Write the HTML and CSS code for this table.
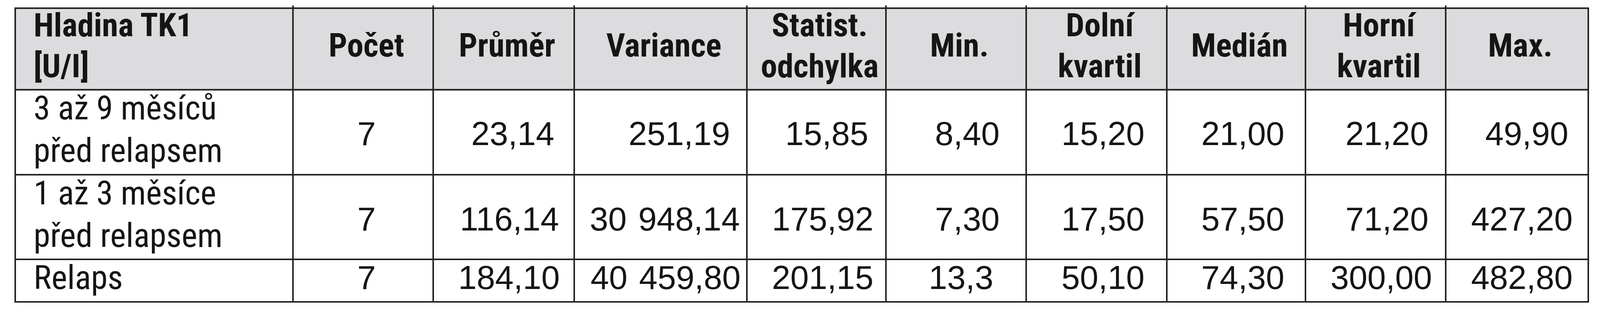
FILE: index.html
```html
<!DOCTYPE html>
<html lang="cs">
<head>
<meta charset="utf-8">
<title>Hladina TK1</title>
<link rel="stylesheet" href="styles.css">
</head>
<body>
<div class="tbl">
  <div class="row hd">
    <div class="c h first">Hladina TK1<br>[U/I]</div>
    <div class="c h">Počet</div>
    <div class="c h">Průměr</div>
    <div class="c h">Variance</div>
    <div class="c h">Statist.<br>odchylka</div>
    <div class="c h">Min.</div>
    <div class="c h">Dolní<br>kvartil</div>
    <div class="c h">Medián</div>
    <div class="c h">Horní<br>kvartil</div>
    <div class="c h">Max.</div>
  </div>
  <div class="row r1">
    <div class="c t">3 až 9 měsíců<br>před relapsem</div>
    <div class="c n cnt">7</div>
    <div class="c n p49">23,14</div>
    <div class="c n p41">251,19</div>
    <div class="c n p43">15,85</div>
    <div class="c n p66">8,40</div>
    <div class="c n p55">15,20</div>
    <div class="c n p52">21,00</div>
    <div class="c n p42">21,20</div>
    <div class="c n p49">49,90</div>
  </div>
  <div class="row r2">
    <div class="c t">1 až 3 měsíce<br>před relapsem</div>
    <div class="c n cnt">7</div>
    <div class="c n p37">116,14</div>
    <div class="c n p16">30 948,14</div>
    <div class="c n p30">175,92</div>
    <div class="c n p66">7,30</div>
    <div class="c n p55">17,50</div>
    <div class="c n p52">57,50</div>
    <div class="c n p42">71,20</div>
    <div class="c n p38">427,20</div>
  </div>
  <div class="row r3">
    <div class="c t">Relaps</div>
    <div class="c n cnt">7</div>
    <div class="c n p35">184,10</div>
    <div class="c n p14">40 459,80</div>
    <div class="c n p30">201,15</div>
    <div class="c n p82">13,3</div>
    <div class="c n p55">50,10</div>
    <div class="c n p52">74,30</div>
    <div class="c n p33">300,00</div>
    <div class="c n p38">482,80</div>
  </div>
</div>
</body>
</html>
```
FILE: styles.css
```css
html, body {
  margin: 0;
  padding: 0;
  background: #ffffff;
}

body {
  color: #151515;
  font-family: "Liberation Sans", Arial, sans-serif;
}

.tbl {
  display: grid;
  grid-template-columns: 707px 355px 357px 438px 352px 355px 356px 351px 355px 361px;
  grid-template-rows: 205px 214px 213px 105px;
  gap: 4px;
  padding: 4px;
  background: #242424;
  width: max-content;
  margin: 19px 0 0 37px;
}

.row {
  display: contents;
}

.c {
  position: relative;
  box-sizing: border-box;
  display: flex;
  align-items: center;
  background: #ffffff;
  white-space: nowrap;
}

/* header */
.h {
  background: #dcdcde;
  font-family: "Roboto Condensed", "Liberation Sans", sans-serif;
  font-weight: 700;
  font-size: 84px;
  line-height: 105px;
  justify-content: center;
  text-align: center;
  padding: 0 0 18px 17px;
}

.h.first {
  justify-content: flex-start;
  text-align: left;
  padding: 0 0 18px 45px;
}

/* interior vertical rules stick out above the top border */
.hd .c:not(:first-child)::before {
  content: "";
  position: absolute;
  left: -4px;
  top: -9px;
  width: 4px;
  height: 9px;
  background: #242424;
}

/* ...and below the bottom border */
.r3 .c:not(:first-child)::after {
  content: "";
  position: absolute;
  left: -4px;
  bottom: -8px;
  width: 4px;
  height: 8px;
  background: #242424;
}

.r1 .c {
  box-shadow: inset 0 3px 0 #ebebeb;
}

/* text cells */
.t {
  font-family: "Roboto Condensed", "Liberation Sans", sans-serif;
  font-size: 86px;
  line-height: 109px;
  padding: 0 0 16px 45px;
}

/* number cells */
.n {
  font-size: 85px;
  line-height: 100px;
  word-spacing: 6px;
  justify-content: flex-end;
}

.r1 .n { padding-top: 7px; }
.r2 .n { padding-top: 11px; }
.r3 .n { padding-bottom: 16px; }

.n.cnt {
  justify-content: center;
  padding-left: 18px;
}

.p14 { padding-right: 14px; }
.p16 { padding-right: 16px; }
.p30 { padding-right: 30px; }
.p33 { padding-right: 33px; }
.p35 { padding-right: 35px; }
.p37 { padding-right: 37px; }
.p38 { padding-right: 38px; }
.p41 { padding-right: 41px; }
.p42 { padding-right: 42px; }
.p43 { padding-right: 43px; }
.p49 { padding-right: 49px; }
.p52 { padding-right: 52px; }
.p55 { padding-right: 55px; }
.p66 { padding-right: 66px; }
.p82 { padding-right: 82px; }
```
